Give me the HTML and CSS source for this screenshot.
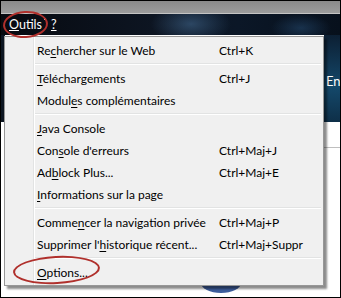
FILE: index.html
```html
<!DOCTYPE html>
<html lang="fr">
<head>
    <meta charset="UTF-8">
    <title>Outils</title>
    <link rel="stylesheet" href="styles.css">
</head>
<body>
    <div class="frame">
        <div class="titlebar"></div>
        <div class="menubar">
            <span class="menubar-item"><u>O</u>utils<span class="tick"></span></span>
            <span class="menubar-item"><u>?</u></span>
        </div>
        <div class="page">
            <div class="page-side"></div>
            <div class="page-banner"><span>En</span></div>
            <div class="page-rule"></div>
            <div class="page-blob"></div>

            <div class="menu">
                <div class="menu-item"><span>Re<u>c</u>hercher sur le Web</span><span>Ctrl+K</span></div>
                <div class="menu-sep"></div>
                <div class="menu-item"><span><u>T</u>éléchargements</span><span>Ctrl+J</span></div>
                <div class="menu-item"><span>Modul<u>e</u>s complémentaires</span><span></span></div>
                <div class="menu-sep"></div>
                <div class="menu-item"><span><u>J</u>ava Console</span><span></span></div>
                <div class="menu-item"><span>Con<u>s</u>ole d'erreurs</span><span>Ctrl+Maj+J</span></div>
                <div class="menu-item"><span>Ad<u>b</u>lock Plus...</span><span>Ctrl+Maj+E</span></div>
                <div class="menu-item"><span><u>I</u>nformations sur la page</span><span></span></div>
                <div class="menu-sep"></div>
                <div class="menu-item"><span>Comme<u>n</u>cer la navigation privée</span><span>Ctrl+Maj+P</span></div>
                <div class="menu-item"><span>Supprimer l'<u>h</u>istorique récent...</span><span>Ctrl+Maj+Suppr</span></div>
                <div class="menu-sep"></div>
                <div class="menu-item"><span><u>O</u>ptions...</span><span></span></div>
            </div>

            <div class="ring ring-options"></div>
        </div>
        <div class="ring ring-outils"></div>
    </div>
</body>
</html>
```

FILE: styles.css
```css
body {
    margin: 0;
    font-family: Lato, "Open Sans", sans-serif;
    font-size: 12px;
    background: #fff;
}
.frame {
    width: 341px;
    height: 298px;
    box-sizing: border-box;
    border: 1px solid #000;
    position: relative;
    overflow: hidden;
    background: #fff;
}
.titlebar {
    height: 12px;
    background: linear-gradient(#8a8a8a, #9c9c9c);
    border-bottom: 1px solid #c4c4c4;
}
.menubar {
    height: 21px;
    display: flex;
    align-items: center;
    gap: 9px;
    padding-left: 8px;
    color: #fff;
    font-size: 12.5px;
    background:
        radial-gradient(ellipse 40px 20px at 190px 10px, rgba(70, 110, 150, 0.55), transparent),
        radial-gradient(ellipse 30px 14px at 300px 14px, rgba(40, 80, 120, 0.5), transparent),
        linear-gradient(90deg, #070a10, #0d1522 45%, #0b1727 70%, #07101c);
}
.menubar-item {
    position: relative;
}
.tick {
    position: absolute;
    right: -4px;
    top: 1px;
    width: 2px;
    height: 2px;
    background: #e8e8e8;
}
.page {
    position: relative;
    height: 263px;
}
.page-side {
    position: absolute;
    left: 0;
    top: 0;
    width: 4px;
    height: 87px;
    background: #0d1622;
}
.page-banner {
    position: absolute;
    right: 0;
    top: 0;
    width: 16px;
    height: 87px;
    background: linear-gradient(#0c1f33, #14486a 60%, #0e2f48);
    color: #fff;
    font-size: 13px;
}
.page-banner span {
    position: absolute;
    left: 2px;
    top: 38px;
}
.page-rule {
    position: absolute;
    right: 0;
    top: 112px;
    width: 16px;
    height: 1px;
    background: #bfbfbf;
}
.page-blob {
    position: absolute;
    left: 200px;
    top: 238px;
    width: 40px;
    height: 20px;
    border-radius: 50%;
    background: #3d5d9c;
}
.menu {
    position: absolute;
    left: 3px;
    top: 1px;
    width: 318px;
    padding: 2px 0;
    background:
        linear-gradient(90deg, transparent 28px, #e2e3e3 28px, #e2e3e3 29px, #fff 29px, #fff 30px, transparent 30px),
        #f0f0f0;
    border: 1px solid #979797;
    box-shadow: 3px 3px 2px rgba(0, 0, 0, 0.45);
    color: #000;
}
.menu-item {
    display: grid;
    grid-template-columns: 182px auto;
    height: 22px;
    align-items: center;
    padding-left: 32px;
    white-space: nowrap;
}
.menu-item u {
    text-decoration-thickness: 1px;
    text-underline-offset: 2px;
}
.menu-sep {
    height: 6px;
    margin-left: 30px;
    margin-right: 2px;
    background: linear-gradient(transparent 2px, #e2e3e3 2px, #e2e3e3 3px, #fff 3px, #fff 4px, transparent 4px);
}
.ring {
    position: absolute;
    border: 2px solid #b0302c;
    border-radius: 50%;
}
.ring-outils {
    left: 2px;
    top: 10px;
    width: 41px;
    height: 23px;
    transform: rotate(-3deg);
}
.ring-options {
    left: 12px;
    top: 221px;
    width: 83px;
    height: 24px;
    transform: rotate(-3deg);
}
```
